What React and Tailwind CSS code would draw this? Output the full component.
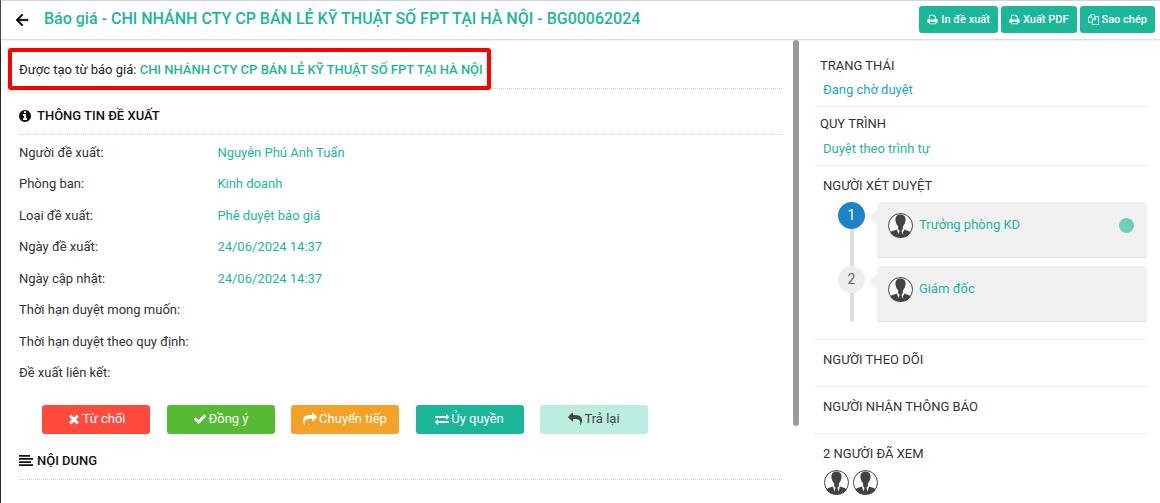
import React from "react";

const PATHS = {
  print:
    "M448 1536h896v-256h-896v256zm0-640h896v-384h-160q-40 0-68-28t-28-68v-160h-640v640zm1152 64q0-26-19-45t-45-19-45 19-19 45 19 45 45 19 45-19 19-45zm128 0v416q0 13-9.5 22.5t-22.5 9.5h-224v160q0 40-28 68t-68 28h-960q-40 0-68-28t-28-68v-160h-224q-13 0-22.5-9.5t-9.5-22.5v-416q0-79 56.5-135.5t135.5-56.5h64v-544q0-40 28-68t68-28h672q40 0 88 20t76 48l152 152q28 28 48 76t20 88v256h64q79 0 135.5 56.5t56.5 135.5z",
  files:
    "M1696 384q40 0 68 28t28 68v1216q0 40-28 68t-68 28h-960q-40 0-68-28t-28-68v-288h-544q-40 0-68-28t-28-68v-672q0-40 20-88t48-76l408-408q28-28 76-48t88-20h416q40 0 68 28t28 68v328q68-40 128-40h416zm-544 213l-299 299h299v-299zm-640-384l-299 299h299v-299zm196 647l316-316v-416h-384v416q0 40-28 68t-68 28h-416v640h512v-256q0-40 20-88t48-76zm956 804v-1152h-384v416q0 40-28 68t-68 28h-416v640h896z",
  times:
    "M1490 1322q0 40-28 68l-136 136q-28 28-68 28t-68-28l-294-294-294 294q-28 28-68 28t-68-28l-136-136q-28-28-28-68t28-68l294-294-294-294q-28-28-28-68t28-68l136-136q28-28 68-28t68 28l294 294 294-294q28-28 68-28t68 28l136 136q28 28 28 68t-28 68l-294 294 294 294q28 28 28 68z",
  check:
    "M1671 566q0 40-28 68l-724 724-136 136q-28 28-68 28t-68-28l-136-136-362-362q-28-28-28-68t28-68l136-136q28-28 68-28t68 28l294 295 656-657q28-28 68-28t68 28l136 136q28 28 28 68z",
  share:
    "M1792 640q0 26-19 45l-512 512q-19 19-45 19t-45-19-19-45v-256h-224q-98 0-175.5 6t-154 21.5-133 42.5-105.5 69.5-80 101-48.5 138.5-17.5 181q0 55 5 123 0 6 2.5 23.5t2.5 26.5q0 15-8.5 25t-23.5 10q-16 0-28-17-7-9-13-22t-13.5-30-10.5-24q-127-285-127-451 0-199 53-333 162-403 875-403h224v-256q0-26 19-45t45-19 45 19l512 512q19 19 19 45z",
  exchange:
    "M1792 1184v192q0 13-9.5 22.5t-22.5 9.5h-1376v192q0 13-9.5 22.5t-22.5 9.5q-12 0-24-10l-319-320q-9-9-9-22 0-14 9-23l320-320q9-9 23-9 13 0 22.5 9.5t9.5 22.5v192h1376q13 0 22.5 9.5t9.5 22.5zm0-544q0 14-9 23l-320 320q-9 9-23 9-13 0-22.5-9.5t-9.5-22.5v-192h-1376q-13 0-22.5-9.5t-9.5-22.5v-192q0-13 9.5-22.5t22.5-9.5h1376v-192q0-14 9-23t23-9q12 0 24 10l319 319q9 9 9 23z",
  info:
    "M1024 1376v-160q0-14-9-23t-23-9h-96v-512q0-14-9-23t-23-9h-320q-14 0-23 9t-9 23v160q0 14 9 23t23 9h96v320h-96q-14 0-23 9t-9 23v160q0 14 9 23t23 9h448q14 0 23-9t9-23zm-128-896v-160q0-14-9-23t-23-9h-192q-14 0-23 9t-9 23v160q0 14 9 23t23 9h192q14 0 23-9t9-23zm640 416q0 209-103 385.5t-279.5 279.5-385.5 103-385.5-103-279.5-279.5-103-385.5 103-385.5 279.5-279.5 385.5-103 385.5 103 279.5 279.5 103 385.5z",
  align:
    "M0 128h1408v230h-1408zM0 520h1792v230h-1792zM0 912h1536v230h-1536zM0 1304h1792v230h-1792z",
};

function Icon({ name, className = "", flip = false }) {
  return (
    <svg viewBox="0 0 1792 1792" fill="currentColor" aria-hidden="true" className={`shrink-0 ${className}`}>
      <path d={PATHS[name]} transform={flip ? "translate(1792 0) scale(-1 1)" : undefined} />
    </svg>
  );
}

function Avatar() {
  return (
    <svg viewBox="0 0 25 25" className="size-[25px] shrink-0" role="img" aria-label="Ảnh đại diện">
      <circle cx="12.5" cy="12.5" r="12" fill="#fff" stroke="#414342" strokeWidth="1" />
      <path
        fill="#414342"
        d="M12.500 1.500C15.800 1.500 17.700 3.800 17.600 6.800C17.500 9.400 16.400 12 14.900 13.200V16L13.500 17.700L14.500 21.600L16 16.500L20.600 18.100C21.600 18.500 22.200 19.100 22.600 19.900A12 12 0 0 1 12.500 24.500A12 12 0 0 1 2.400 19.900C2.800 19.100 3.400 18.500 4.400 18.100L9 16.500L10.500 21.600L11.500 17.700L10.100 16V13.200C8.600 12 7.500 9.400 7.400 6.800C7.300 3.800 9.200 1.500 12.500 1.500Z"
      />
    </svg>
  );
}

const TOOLS = [
  ["print", "In đề xuất"],
  ["print", "Xuất PDF"],
  ["files", "Sao chép"],
];

const DETAILS = [
  ["Người đề xuất:", "Nguyễn Phú Anh Tuấn"],
  ["Phòng ban:", "Kinh doanh"],
  ["Loại đề xuất:", "Phê duyệt báo giá"],
  ["Ngày đề xuất:", "24/06/2024 14:37"],
  ["Ngày cập nhật:", "24/06/2024 14:37"],
  ["Thời hạn duyệt mong muốn:", ""],
  ["Thời hạn duyệt theo quy định:", ""],
  ["Đề xuất liên kết:", ""],
];

const ACTIONS = [
  ["times", "Từ chối", "bg-[#ff4a3d] text-white", false],
  ["check", "Đồng ý", "bg-[#57ba35] text-white", false],
  ["share", "Chuyển tiếp", "bg-[#f4a227] text-white", false],
  ["exchange", "Ủy quyền", "bg-[#1ab799] text-white", false],
  ["share", "Trả lại", "bg-[#baece0] text-[#444]", true],
];

const STEPS = [
  { name: "Trưởng phòng KD", badge: "bg-[#1d82c8] text-white", active: true },
  { name: "Giám đốc", badge: "bg-[#ededed] text-[#666]", active: false },
];

function SectionTitle({ icon, children }) {
  return (
    <h2 className="flex items-center gap-1 border-b border-dotted border-[#ccc] pt-[17px] pb-2 font-medium text-[#111]">
      <Icon name={icon} className="size-3.5" />
      {children}
    </h2>
  );
}

function SideBlock({ title, children }) {
  return (
    <section className="border-b border-[#eee] pt-[10px] pb-4 pl-[9px]">
      <h3>{title}</h3>
      {children}
    </section>
  );
}

export default function App() {
  return (
    <div className="flex min-h-screen flex-col border-t border-l border-t-[#d0d4de] border-l-[#1f2733] bg-white font-['Roboto','Noto_Sans',sans-serif] text-[13px] leading-5 text-[#333]">
      <header className="flex items-center justify-between border-b border-[#ddd] pr-[5px] pl-[12px] shadow-[0_1px_1px_#f3f3f3]">
        <div className="flex items-center gap-[13px]">
          <button type="button" aria-label="Quay lại" className="text-black">
            <svg viewBox="0 0 24 24" className="size-[18px]" fill="currentColor" stroke="currentColor" strokeWidth="0.8">
              <path d="M20 11H7.830l5.590-5.590L12 4l-8 8 8 8 1.410-1.410L7.830 13H20v-2z" />
            </svg>
          </button>
          <h1 className="pb-[3px] text-base font-medium text-[#1ab799]">
            Báo giá - CHI NHÁNH CTY CP BÁN LẺ KỸ THUẬT SỐ FPT TẠI HÀ NỘI - BG00062024
          </h1>
        </div>
        <div className="flex gap-[3px] pt-[5px] pb-[6px]">
          {TOOLS.map(([icon, label]) => (
            <button
              key={label}
              type="button"
              className="flex h-[27px] items-center gap-[3px] rounded-[3px] bg-[#1ab799] px-2 text-[11px] font-medium text-white"
            >
              <Icon name={icon} className="size-[11px]" />
              {label}
            </button>
          ))}
        </div>
      </header>

      <div className="flex flex-1">
        <main className="min-w-0 flex-1 pr-[11px] pl-[18px]">
          <div className="border-b border-dotted border-[#ccc] pt-5 pb-2">
            <p className="relative w-fit text-[#222]">
              Được tạo từ báo giá:{" "}
              <a href="#bao-gia" className="font-medium text-[#1ab799]">
                CHI NHÁNH CTY CP BÁN LẺ KỸ THUẬT SỐ FPT TẠI HÀ NỘI
              </a>
              <span className="pointer-events-none absolute -top-3 -right-2 -bottom-[10px] -left-[11px] rounded-[3px] border-4 border-[#fe0000]" />
            </p>
          </div>

          <SectionTitle icon="info">THÔNG TIN ĐỀ XUẤT</SectionTitle>
          <dl className="mt-0.5 grid min-h-[252px] auto-rows-fr">
            {DETAILS.map(([label, value]) => (
              <div key={label} className="grid grid-cols-[26%_1fr] items-center">
                <dt>{label}</dt>
                <dd className="text-[#1ab799]">{value}</dd>
              </div>
            ))}
          </dl>

          <div className="mt-4 ml-[23px] flex max-w-[606px] justify-between">
            {ACTIONS.map(([icon, label, color, flip]) => (
              <button
                key={label}
                type="button"
                className={`flex h-[29px] w-[108px] items-center justify-center gap-[2px] rounded-[3px] pb-0.5 ${color}`}
              >
                <Icon name={icon} flip={flip} className="size-3.5" />
                {label}
              </button>
            ))}
          </div>

          <SectionTitle icon="align">NỘI DUNG</SectionTitle>
        </main>

        <div className="w-1.5">
          <div className="h-5/6 rounded-full bg-[#999]" />
        </div>

        <aside className="mr-3 ml-[15px] w-[334px]">
          <section className="border-b border-[#eee] pt-4 pb-1.5 pl-1.5">
            <h3>TRẠNG THÁI</h3>
            <p className="mt-1 pl-[3px] text-[#1ba3d6]">Đang chờ duyệt</p>
          </section>
          <section className="border-b border-[#eee] pt-[7px] pb-1.5 pl-1.5">
            <h3>QUY TRÌNH</h3>
            <p className="mt-[5px] pl-[3px] text-[#1ab799]">Duyệt theo trình tự</p>
          </section>
          <SideBlock title="NGƯỜI XÉT DUYỆT">
            <ol className="mt-1.5 mb-px ml-[15px]">
              {STEPS.map((step, i) => (
                <li key={step.name} className="group flex">
                  <div className="flex w-[27px] shrink-0 flex-col items-center">
                    <span
                      className={`flex size-[27px] items-center justify-center rounded-full pb-px text-sm ${step.badge}`}
                    >
                      {i + 1}
                    </span>
                    <span className="w-1 flex-1 bg-[#ddd] group-last:rounded-b-full" />
                  </div>
                  <svg viewBox="0 0 8 16" className="mt-[7px] ml-1 h-4 w-2 shrink-0" aria-hidden="true">
                    <path d="M8 0v16L0 8z" fill="#f1f1f1" />
                  </svg>
                  <div className="mr-px mb-2 flex h-14 flex-1 items-start gap-1.5 rounded-[2px] border-b border-[#ddd] bg-[#f1f1f1] pt-[11px] pr-[13px] pl-[11px] group-last:mb-0">
                    <Avatar />
                    <a href="#nguoi-duyet" className="flex-1 pt-0.5 text-[#1ab799]">
                      {step.name}
                    </a>
                    {step.active && <span className="mt-[5px] size-[15px] rounded-full bg-[#6dceb9]" />}
                  </div>
                </li>
              ))}
            </ol>
          </SideBlock>
          <SideBlock title="NGƯỜI THEO DÕI" />
          <SideBlock title="NGƯỜI NHẬN THÔNG BÁO" />
          <section className="pt-[10px] pl-[9px]">
            <h3>2 NGƯỜI ĐÃ XEM</h3>
            <div className="mt-1.5 ml-px flex gap-1">
              <Avatar />
              <Avatar />
            </div>
          </section>
        </aside>
      </div>
    </div>
  );
}
